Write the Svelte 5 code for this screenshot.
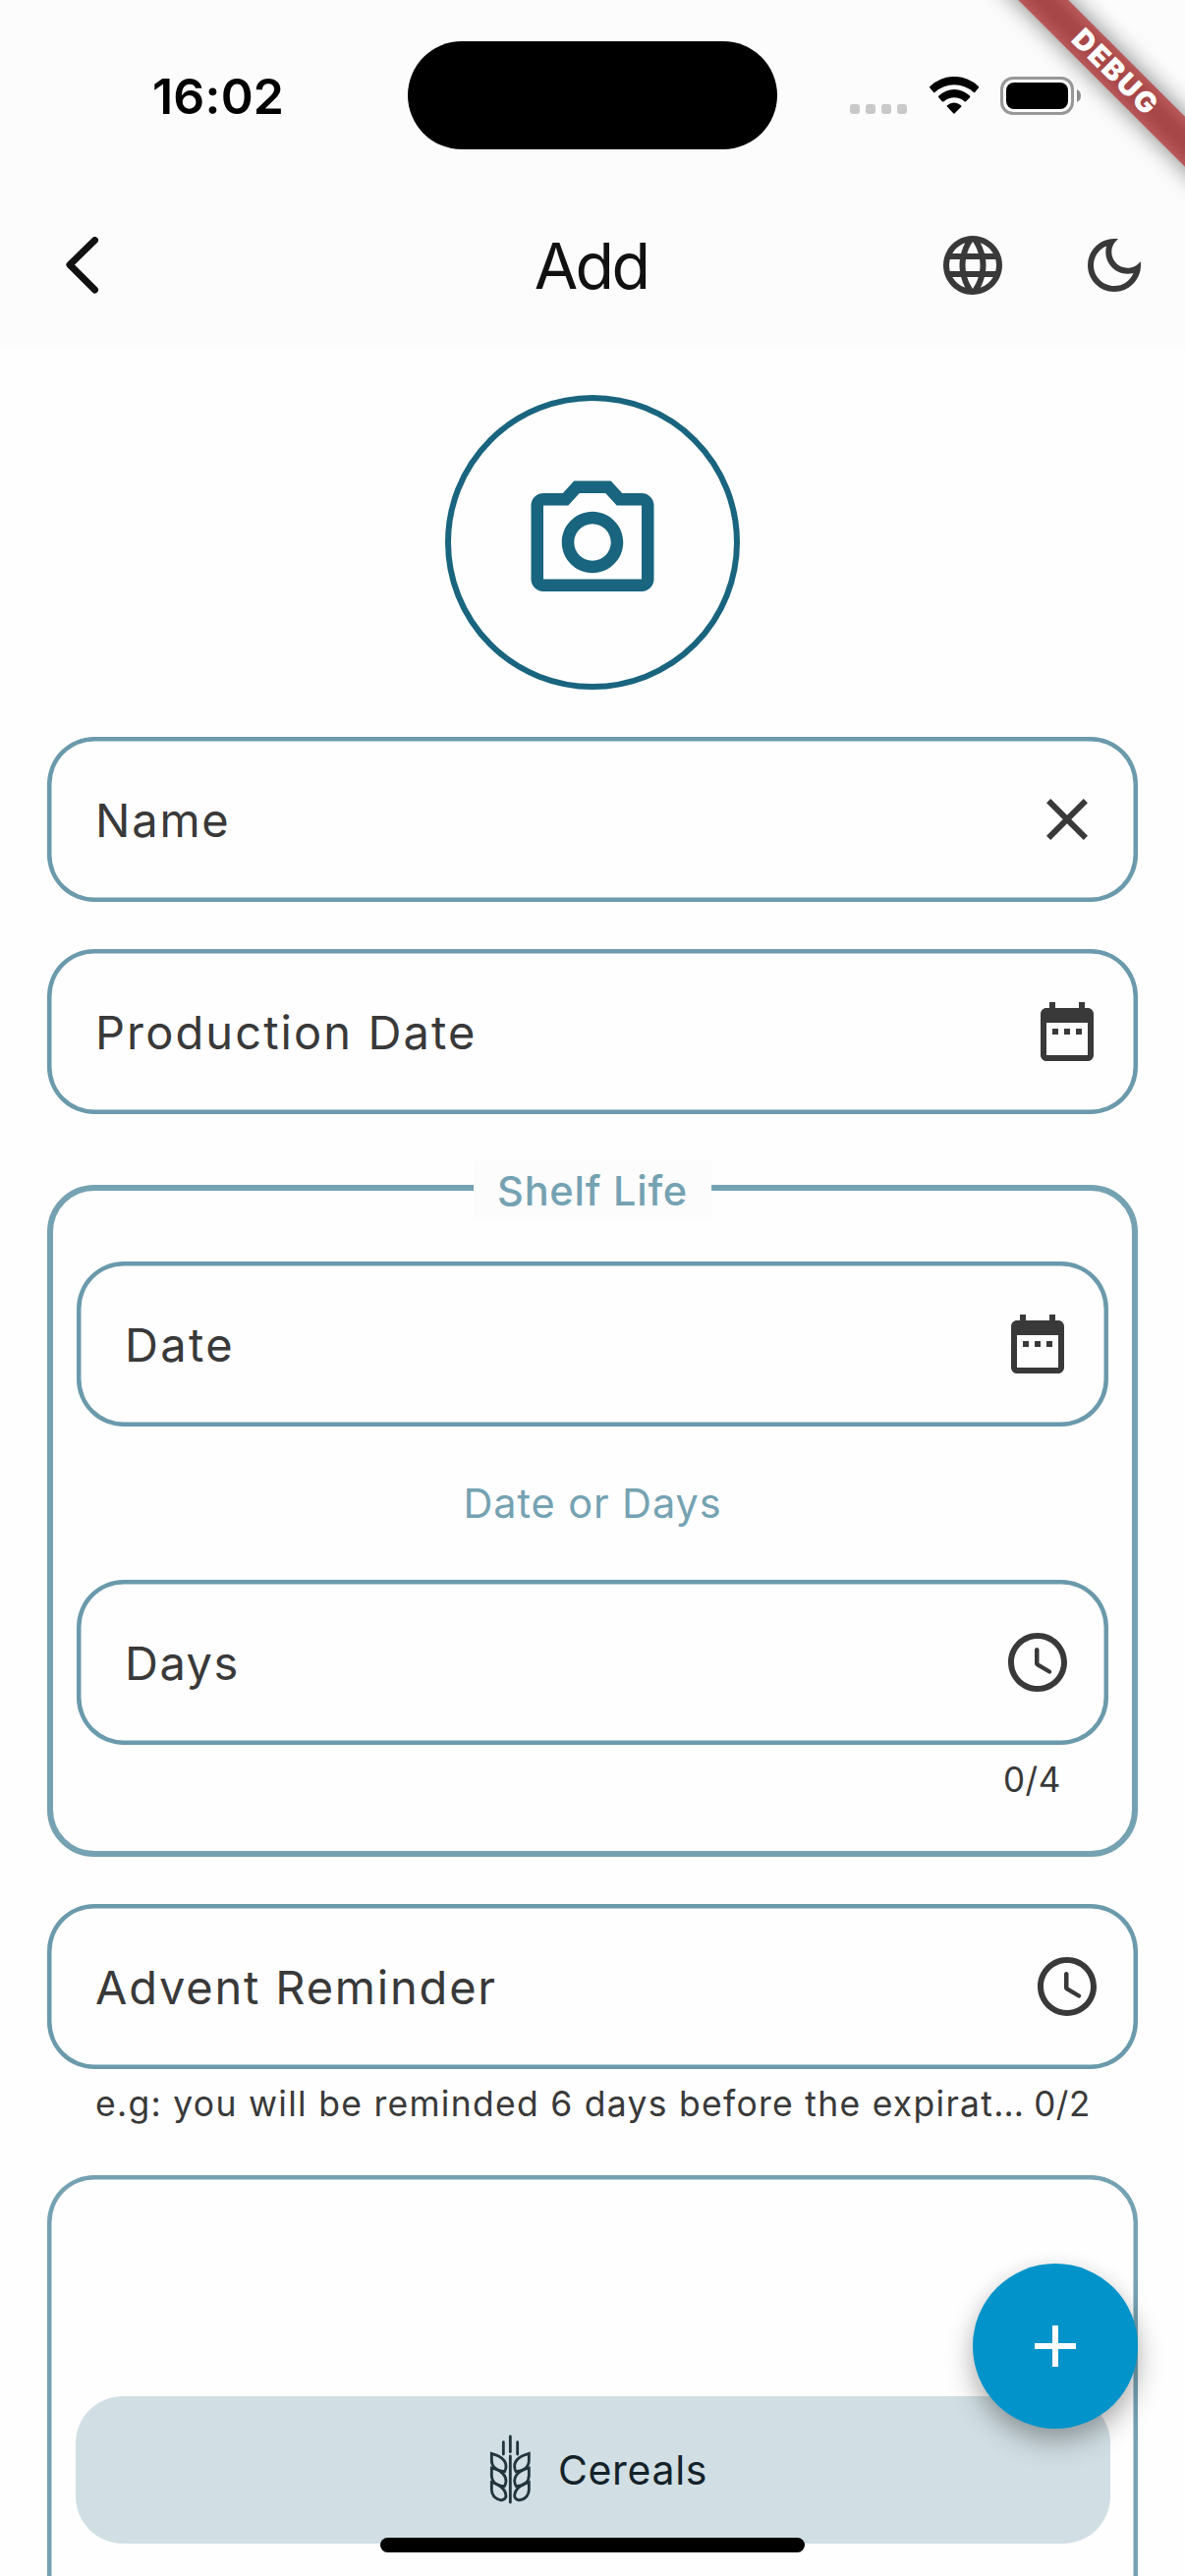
<script>
  const icons = {
    close:
      'M19 6.41L17.59 5 12 10.59 6.41 5 5 6.41 10.59 12 5 17.59 6.41 19 12 13.41 17.59 19 19 17.59 13.41 12z',
    calendar:
      'M9 11H7v2h2v-2zm4 0h-2v2h2v-2zm4 0h-2v2h2v-2zm2-7h-1V2h-2v2H8V2H6v2H5c-1.11 0-1.99.9-1.99 2L3 20c0 1.1.89 2 2 2h14c1.1 0 2-.9 2-2V6c0-1.1-.9-2-2-2zm0 16H5V9h14v11z',
    clock:
      'M11.99 2C6.47 2 2 6.48 2 12s4.47 10 9.99 10C17.52 22 22 17.52 22 12S17.52 2 11.99 2zM12 20c-4.42 0-8-3.58-8-8s3.58-8 8-8 8 3.58 8 8-3.58 8-8 8zm-.22-13h-.06c-.4 0-.72.32-.72.72v4.72c0 .35.18.68.49.86l4.15 2.49c.34.2.78.1.98-.24.21-.34.1-.79-.25-.99l-3.87-2.3V7.72c0-.4-.32-.72-.72-.72z',
    globe:
      'M11.99 2C6.47 2 2 6.48 2 12s4.47 10 9.99 10C17.52 22 22 17.52 22 12S17.52 2 11.99 2zm6.93 6h-2.95c-.32-1.25-.78-2.45-1.38-3.56 1.84.63 3.37 1.91 4.33 3.56zM12 4.04c.83 1.2 1.48 2.53 1.91 3.96h-3.82c.43-1.43 1.08-2.76 1.91-3.96zM4.26 14C4.1 13.36 4 12.69 4 12s.1-1.36.26-2h3.38c-.08.66-.14 1.32-.14 2 0 .68.06 1.34.14 2H4.26zm.82 2h2.95c.32 1.25.78 2.45 1.38 3.56-1.84-.63-3.37-1.9-4.33-3.56zm2.95-8H5.08c.96-1.66 2.49-2.93 4.33-3.56C8.81 5.55 8.35 6.75 8.03 8zM12 19.96c-.83-1.2-1.48-2.53-1.91-3.96h3.82c-.43 1.43-1.08 2.76-1.91 3.96zM14.34 14H9.66c-.09-.66-.16-1.32-.16-2 0-.68.07-1.35.16-2h4.68c.09.65.16 1.32.16 2 0 .68-.07 1.34-.16 2zm.25 5.56c.6-1.11 1.06-2.31 1.38-3.56h2.95c-.96 1.65-2.49 2.93-4.33 3.56zM16.36 14c.08-.66.14-1.32.14-2 0-.68-.06-1.34-.14-2h3.38c.16.64.26 1.31.26 2s-.1 1.36-.26 2h-3.38z',
    moon:
      'M9.37 5.51c-.18.64-.27 1.31-.27 1.99 0 4.08 3.32 7.4 7.4 7.4.68 0 1.35-.09 1.99-.27C17.45 17.19 14.93 19 12 19c-3.86 0-7-3.14-7-7 0-2.93 1.81-5.45 4.37-6.49zM12 3c-4.97 0-9 4.03-9 9s4.03 9 9 9 9-4.03 9-9c0-.46-.04-.92-.1-1.36-.98 1.37-2.58 2.26-4.4 2.26-2.98 0-5.4-2.42-5.4-5.4 0-1.81.89-3.42 2.26-4.4C12.92 3.04 12.46 3 12 3z',
    camera:
      'M14.12 4l1.83 2H20v12H4V6h4.05l1.83-2h4.24M15 2H9L7.17 4H4c-1.1 0-2 .9-2 2v12c0 1.1.9 2 2 2h16c1.1 0 2-.9 2-2V6c0-1.1-.9-2-2-2h-3.17L15 2zm-3 7c1.65 0 3 1.35 3 3s-1.35 3-3 3-3-1.35-3-3 1.35-3 3-3m0-2c-2.76 0-5 2.24-5 5s2.24 5 5 5 5-2.24 5-5-2.24-5-5-5z',
    plus: 'M19 13h-6v6h-2v-6H5v-2h6V5h2v6h6v2z'
  };
</script>

{#snippet icon(name)}
  <svg class="icon" viewBox="0 0 24 24"><path d={icons[name]} /></svg>
{/snippet}

{#snippet field(label, name, tracking)}
  <div class="field">
    <span class="label" style:letter-spacing="{tracking}px">{label}</span>
    {@render icon(name)}
  </div>
{/snippet}

<div class="screen">
  <header>
    <div class="status">
      <span class="time">16:02</span>
      <div class="island"></div>
      <div class="indicators">
        <div class="dots"><i></i><i></i><i></i><i></i></div>
        <svg class="wifi" viewBox="436 235 152 116">
          <path d="M438 270Q434 267 438 264A107 107 0 0 1 585 264Q589 267 585 270L575 282Q573 285 570 282A88 88 0 0 0 453 282Q450 285 448 282Z" />
          <path d="M464 299Q461 296 465 293A67 67 0 0 1 558 293Q562 296 559 299L548 310Q545 313 542 310A47 47 0 0 0 481 310Q477 313 474 310Z" />
          <path d="M491 328Q487 325 491 322A30 30 0 0 1 531 322Q535 325 532 328L514 346Q511 350 508 346Z" />
        </svg>
        <div class="battery"><div class="charge"></div></div>
        <svg class="nub" viewBox="0 0 4 13"><path d="M0 0Q4 2 4 6.5T0 13Z" /></svg>
      </div>
    </div>
    <div class="appbar">
      <svg class="back" viewBox="0 0 34 58"><path d="M29.500 3.500L4 28.500L29.500 54" /></svg>
      <h1>Add</h1>
      <div class="actions">
        {@render icon('globe')}
        {@render icon('moon')}
      </div>
    </div>
  </header>

  <main>
    <div class="photo">{@render icon('camera')}</div>
    {@render field('Name', 'close', 1.8)}
    {@render field('Production Date', 'calendar', 2.1)}

    <section class="group">
      <span class="legend">Shelf Life</span>
      {@render field('Date', 'calendar', 2.3)}
      <p class="or">Date or Days</p>
      {@render field('Days', 'clock', 1.5)}
      <div class="support"><span class="counter">0/4</span></div>
    </section>

    {@render field('Advent Reminder', 'clock', 1.8)}
    <div class="support outer">
      <span class="helper">e.g: you will be reminded 6 days before the expirat…</span>
      <span class="counter">0/2</span>
    </div>

    <section class="categories">
      <div class="chip">
        <svg class="wheat" viewBox="412 172 135 220">
          <path d="M479 181V228M479 241V382M458 198V235M501 198V235" />
          {#each ['', 'matrix(-1 0 0 1 958 0)'] as flip}
            <g transform={flip}>
              <path d="M422 233C448 240 466 252 466 272Q466 281 462 288C439 286 422 275 422 254Z" />
              <path d="M422 277C448 284 466 297 466 318Q465 327 461 333C438 331 422 319 422 300Z" />
              <path d="M422 321C448 329 466 341 466 364Q464 372 455 375C436 377 422 361 422 344Z" />
            </g>
          {/each}
        </svg>
        <span>Cereals</span>
      </div>
    </section>
  </main>

  <div class="fab">{@render icon('plus')}</div>
  <div class="home"></div>
  <div class="ribbon">
    <div class="shade"></div>
    <div class="band">DEBUG</div>
  </div>
</div>

<style>
  :global(body) {
    margin: 0;
    background: #fefefe;
  }
  .screen {
    position: relative;
    width: 1206px;
    height: 2622px;
    overflow: hidden;
    background: #fefefe;
    color: #393939;
    font-family: 'Inter', 'Liberation Sans', sans-serif;
  }
  .icon {
    width: 72px;
    height: 72px;
    flex: none;
    fill: #393939;
  }

  header {
    height: 354px;
    background: #fcfcfc;
  }
  .status {
    display: grid;
    grid-template-columns: 415px 376px 1fr;
    align-items: center;
    height: 194px;
    color: #000;
  }
  .time {
    padding: 2px 0 0 155px;
    font-size: 50px;
    font-weight: 600;
    letter-spacing: 0.2px;
    line-height: 60px;
  }
  .island {
    height: 110px;
    border-radius: 55px;
    background: #000;
  }
  .indicators {
    display: flex;
    align-items: center;
    padding-left: 74px;
  }
  .dots {
    display: flex;
    gap: 6px;
    margin: 28px 22.5px 0 0;
  }
  .dots i {
    width: 10px;
    height: 10px;
    border-radius: 3px;
    background: #c9c9c9;
  }
  .wifi {
    width: 50.67px;
    height: 38.67px;
    margin-right: 22px;
  }
  .battery {
    box-sizing: border-box;
    width: 75px;
    height: 39px;
    padding: 3px;
    border: 3px solid #989898;
    border-radius: 13px;
    margin: 1px 3px 0 0;
  }
  .charge {
    height: 27px;
    border-radius: 8px;
    background: #000;
  }
  .nub {
    width: 4px;
    height: 13px;
    fill: #8c8c8c;
  }

  .appbar {
    display: grid;
    grid-template-columns: 1fr auto 1fr;
    align-items: center;
    height: 152px;
    padding: 0 36px 0 67px;
  }
  .back {
    width: 34px;
    height: 58px;
    fill: none;
    stroke: #111;
    stroke-width: 7;
    stroke-linecap: round;
    stroke-linejoin: round;
  }
  h1 {
    margin: 2px 0 0 -34px;
    color: #111;
    font-size: 64.5px;
    font-weight: 400;
    line-height: 78px;
    letter-spacing: -2.6px;
  }
  .actions {
    display: flex;
    justify-content: flex-end;
    gap: 72px;
  }

  main {
    display: flex;
    flex-direction: column;
    height: 2268px;
    box-sizing: border-box;
    padding: 48px 48px 0;
  }
  .photo {
    display: grid;
    place-items: center;
    align-self: center;
    box-sizing: border-box;
    flex: none;
    width: 300px;
    height: 300px;
    margin-bottom: 48px;
    border: 6px solid #19647e;
    border-radius: 50%;
  }
  .photo .icon {
    width: 150px;
    height: 150px;
    fill: #19647e;
  }

  .field {
    display: flex;
    align-items: center;
    justify-content: space-between;
    flex: none;
    box-sizing: border-box;
    height: 168px;
    padding: 0 36px 0 49px;
    border-radius: 48px;
    box-shadow: inset 0 0 0 4.5px #6a9aab;
  }
  main > .field {
    margin-bottom: 48px;
  }
  main > .field:has(+ .support) {
    margin-bottom: 0;
  }
  .label {
    padding-top: 2px;
    font-size: 47px;
    line-height: 58px;
  }

  .group {
    position: relative;
    flex: none;
    box-sizing: border-box;
    height: 684px;
    margin: 24px 0 48px;
    padding: 72px 24px 32px;
    border: 6px solid #75a2b2;
    border-radius: 48px;
  }
  .legend {
    position: absolute;
    top: -30px;
    left: 50%;
    transform: translateX(-50%);
    padding: 0 24px;
    background: #fcfcfc;
    color: #75a2b2;
    font-size: 41.5px;
    font-weight: 500;
    letter-spacing: 0.75px;
    line-height: 60px;
    white-space: nowrap;
  }
  .or {
    margin: 0;
    color: #75a2b2;
    font-size: 41.5px;
    letter-spacing: 0.9px;
    line-height: 156px;
    text-align: center;
  }
  .support {
    display: flex;
    justify-content: flex-end;
    flex: none;
    height: 70px;
    padding: 0 48px;
    font-size: 35px;
    line-height: 71px;
  }
  .support.outer {
    justify-content: space-between;
    margin-bottom: 38px;
    padding-left: 49px;
  }
  .helper {
    font-size: 35.5px;
    letter-spacing: 1.28px;
    white-space: nowrap;
  }
  .counter {
    letter-spacing: 0.6px;
  }

  .categories {
    flex: none;
    box-sizing: border-box;
    height: 600px;
    padding: 224.5px 28.5px 0;
    border-radius: 48px;
    box-shadow: inset 0 0 0 4.5px #75a2b2;
  }
  .chip {
    display: flex;
    align-items: center;
    justify-content: center;
    box-sizing: border-box;
    height: 150px;
    padding-left: 11px;
    gap: 26px;
    border-radius: 48px;
    background: #d1dfe4;
    color: #14222a;
    font-size: 41px;
    letter-spacing: 0.67px;
  }
  .wheat {
    width: 45px;
    height: 73.33px;
    fill: none;
    stroke: #22343c;
    stroke-width: 8.5;
    stroke-linecap: round;
    stroke-linejoin: miter;
  }

  .fab {
    position: absolute;
    right: 48px;
    bottom: 150px;
    display: grid;
    place-items: center;
    width: 168px;
    height: 168px;
    border-radius: 50%;
    background: #0193c9;
    box-shadow:
      0 14px 28px rgba(0, 0, 0, 0.29),
      0 2px 20px rgba(0, 0, 0, 0.06);
  }
  .fab .icon {
    fill: #fcfcfc;
  }
  .home {
    position: absolute;
    left: 387px;
    bottom: 24px;
    width: 432px;
    height: 15px;
    border-radius: 8px;
    background: #000;
  }
  .ribbon {
    position: absolute;
    top: 0;
    left: 1206px;
    width: 0;
    height: 0;
    transform: rotate(45deg);
  }
  .shade,
  .band {
    position: absolute;
    top: 84px;
    left: -150px;
    width: 300px;
    height: 36px;
  }
  .shade {
    background: rgba(0, 0, 0, 0.5);
    filter: blur(12px);
  }
  .band {
    background: rgba(183, 28, 28, 0.627);
    color: #fff;
    font-size: 29px;
    font-weight: 900;
    letter-spacing: 2px;
    line-height: 36px;
    text-align: center;
    text-indent: 4px;
  }
</style>
